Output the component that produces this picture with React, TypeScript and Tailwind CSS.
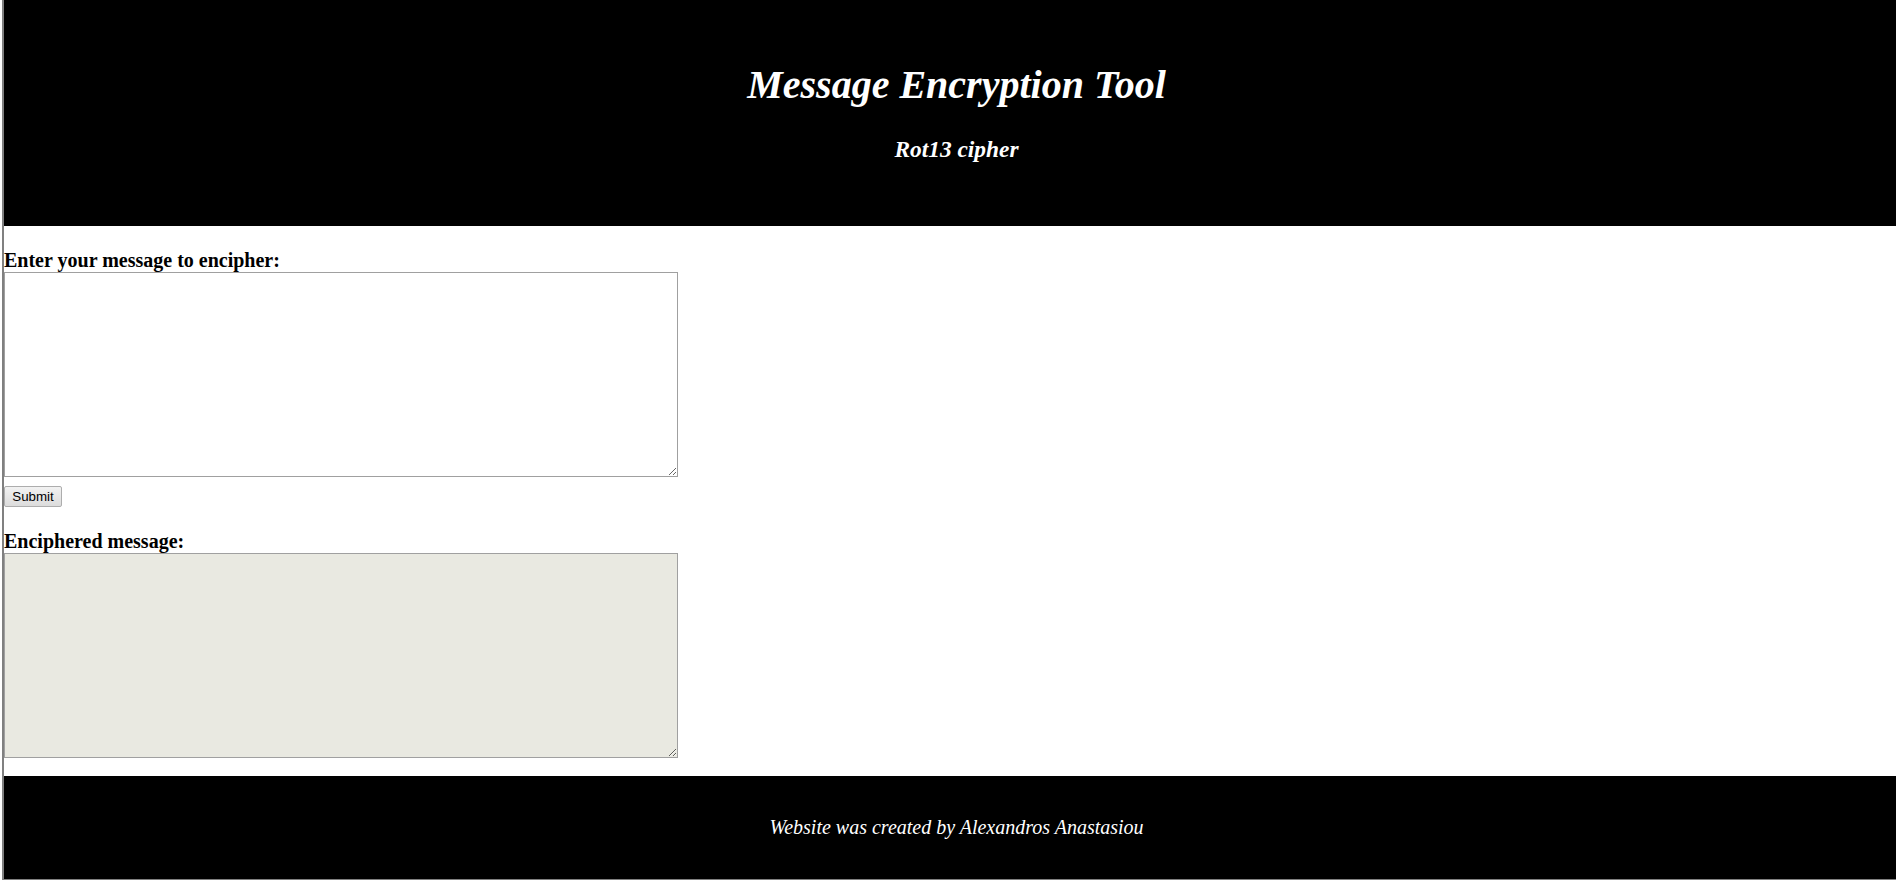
export default function App() {
  return (
    <div className="ml-[2px] min-h-[880px] border-b border-l-2 border-[#808080] bg-white font-['Liberation_Serif',serif] text-[20px] text-black">
      <header className="h-[226px] bg-black pl-[13px] pt-[62px] text-center text-white">
        <h1 className="text-[40px] font-bold italic leading-[46px]">Message Encryption Tool</h1>
        <h3 className="mt-[28px] text-[23.4px] font-bold italic leading-[27px]">Rot13 cipher</h3>
      </header>

      <main className="pt-[23px] pb-[18px]">
        <label htmlFor="plain" className="block h-[23px] font-bold leading-[23px]">
          Enter your message to encipher:
        </label>
        <textarea
          id="plain"
          className="block h-[205px] w-[674px] border border-[#a0a0a0] bg-white"
        />
        <button
          type="button"
          className="mt-[9px] block h-[21px] w-[58px] rounded-[2px] border border-[#adadad] bg-gradient-to-b from-[#f2f2f2] to-[#dcdcdc] font-['Liberation_Sans',sans-serif] text-[13.33px] leading-[19px]"
        >
          Submit
        </button>

        <label htmlFor="cipher" className="mt-[23px] block h-[23px] font-bold leading-[23px]">
          Enciphered message:
        </label>
        <textarea
          id="cipher"
          readOnly
          className="block h-[205px] w-[674px] border border-[#a0a0a0] bg-[#e9e9e1]"
        />
      </main>

      <footer className="flex h-[103px] items-center justify-center bg-black pl-[13px] text-white">
        <p className="italic leading-[23px]">Website was created by Alexandros Anastasiou</p>
      </footer>
    </div>
  );
}
